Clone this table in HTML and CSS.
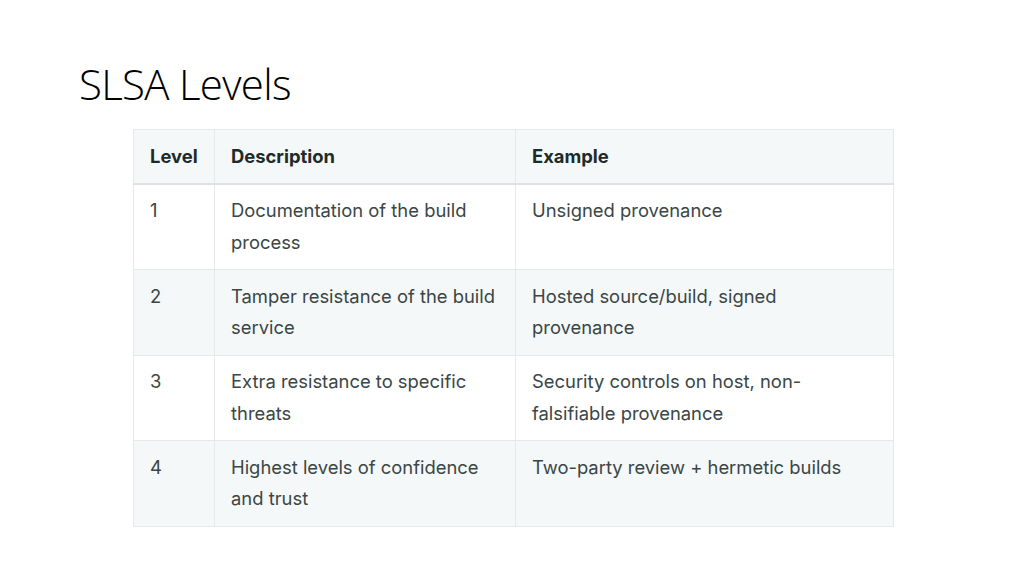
FILE: index.html
```html
<!DOCTYPE html>
<html>
<head>
<meta charset="utf-8">
<link rel="stylesheet" href="styles.css">
</head>
<body>
<div class="slide">
  <h1 class="title">SLSA Levels</h1>
  <div class="table-wrap">
    <table class="levels">
      <thead>
        <tr><th class="c1">Level</th><th class="c2">Description</th><th class="c3">Example</th></tr>
      </thead>
      <tbody>
        <tr><td>1</td><td>Documentation of the build process</td><td>Unsigned provenance</td></tr>
        <tr><td>2</td><td>Tamper resistance of the build service</td><td>Hosted source/build, signed provenance</td></tr>
        <tr><td>3</td><td>Extra resistance to specific threats</td><td>Security controls on host, non-falsifiable provenance</td></tr>
        <tr><td>4</td><td>Highest levels of confidence and trust</td><td>Two-party review + hermetic builds</td></tr>
      </tbody>
    </table>
  </div>
</div>
</body>
</html>
```
FILE: styles.css
```css
html, body {
  margin: 0;
  padding: 0;
  background: #ffffff;
}
.slide {
  width: 1024px;
  height: 576px;
  box-sizing: border-box;
  padding: 56px 0 0 79px;
}
.title {
  margin: 0;
  font-family: "Open Sans", sans-serif;
  font-weight: 300;
  font-size: 42px;
  line-height: 56px;
  letter-spacing: -0.7px;
  color: #000;
}
.table-wrap {
  margin: 17px 0 0 54px;
}
.levels {
  width: 761px;
  border-collapse: collapse;
  font-family: Inter, sans-serif;
  font-size: 18.4px;
  line-height: 31.5px;
  color: #3b4646;
}
.levels th, .levels td {
  border: 1px solid #e6e9e9;
  text-align: left;
  vertical-align: top;
  padding: 10.5px 16px 11px 16px;
}
.levels th {
  font-weight: 700;
  color: #1e2b2b;
  background: #f5f8f8;
  padding: 11px 16px 10px 16px;
  border-bottom: 2px solid #dfe2e2;
}
.levels .c1 { width: 48px; }
.levels .c2 { width: 268px; }
.levels tbody tr:nth-child(even) td {
  background: #f5f8f8;
}
```
